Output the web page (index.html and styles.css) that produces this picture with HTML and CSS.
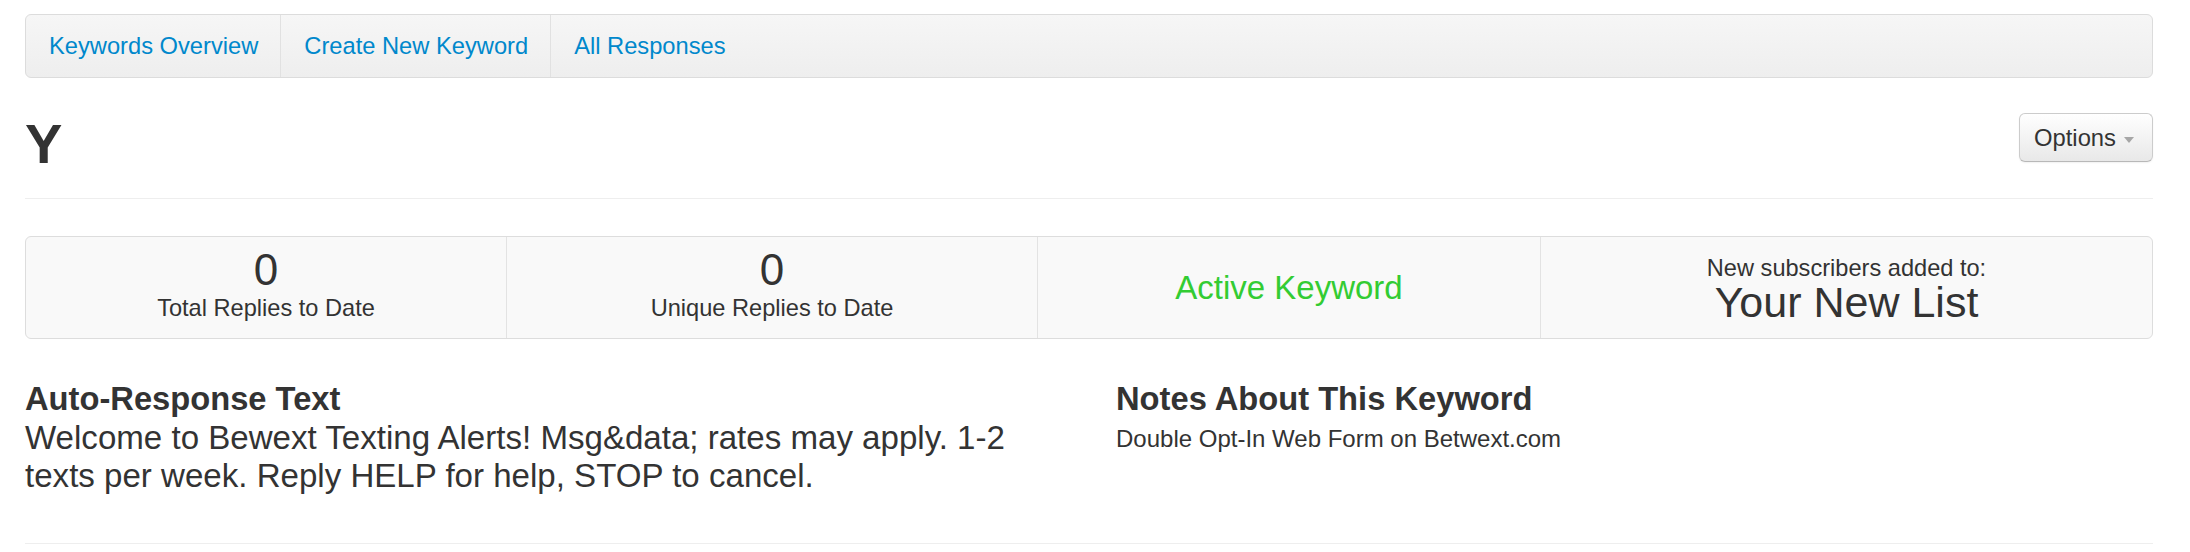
FILE: index.html
```html
<!DOCTYPE html>
<html lang="en">
<head>
<meta charset="utf-8">
<title>Keyword Y</title>
<link rel="stylesheet" href="styles.css">
</head>
<body>
<div class="container">
  <nav class="navbar">
    <a class="nav-item" href="#">Keywords Overview</a>
    <a class="nav-item" href="#">Create New Keyword</a>
    <a class="nav-item nav-last" href="#">All Responses</a>
  </nav>

  <header class="page-header">
    <h1 class="title">Y</h1>
    <button class="btn" type="button">Options <span class="caret"></span></button>
  </header>
  <hr class="rule rule-top">

  <div class="stats">
    <div class="stat stat-num">
      <div class="stat-value">0</div>
      <div class="stat-label">Total Replies to Date</div>
    </div>
    <div class="stat stat-num">
      <div class="stat-value">0</div>
      <div class="stat-label">Unique Replies to Date</div>
    </div>
    <div class="stat">
      <div class="stat-active">Active Keyword</div>
    </div>
    <div class="stat stat-list">
      <div class="stat-label">New subscribers added to:</div>
      <div class="stat-listname">Your New List</div>
    </div>
  </div>

  <div class="details">
    <section class="detail">
      <h2 class="detail-title">Auto-Response Text</h2>
      <p class="detail-lead">Welcome to Bewext Texting Alerts! Msg&amp;data; rates may apply. 1-2 texts per week. Reply HELP for help, STOP to cancel.</p>
    </section>
    <section class="detail">
      <h2 class="detail-title">Notes About This Keyword</h2>
      <p class="detail-note">Double Opt-In Web Form on Betwext.com</p>
    </section>
  </div>
  <hr class="rule rule-bottom">
</div>
</body>
</html>
```

FILE: styles.css
```css
html, body {
  margin: 0;
  padding: 0;
  background: #ffffff;
}

body {
  font-family: "Liberation Sans", Arial, Helvetica, sans-serif;
  color: #333333;
  font-size: 23.7px;
}

.container {
  width: 2128px;
  margin-left: 25px;
  padding-top: 14px;
}

/* nav bar */
.navbar {
  display: flex;
  height: 62px;
  border: 1px solid #dcdcdc;
  border-radius: 6px;
  background: linear-gradient(#f6f6f6, #eeeeee);
}

.nav-item {
  display: flex;
  align-items: center;
  padding: 0 22px 0 23px;
  border-right: 1px solid #e1e1e1;
  color: #0088cc;
  text-decoration: none;
  font-size: 23.7px;
}

.nav-last {
  border-right: none;
}

/* header */
.page-header {
  display: flex;
  justify-content: space-between;
  align-items: flex-start;
  margin-top: 35px;
}

.title {
  margin: 0;
  font-size: 56px;
  line-height: 62px;
  font-weight: bold;
  color: #333333;
}

.btn {
  display: flex;
  align-items: center;
  gap: 8px;
  height: 49px;
  padding: 0 18px 0 14px;
  border: 1px solid #cccccc;
  border-bottom-color: #b8b8b8;
  border-radius: 6px;
  background: linear-gradient(#ffffff, #e8e8e8);
  box-shadow: 0 1px 2px rgba(0, 0, 0, 0.06);
  font-family: "Liberation Sans", Arial, Helvetica, sans-serif;
  font-size: 23.8px;
  color: #333333;
}

.caret {
  width: 0;
  height: 0;
  margin-top: 4px;
  border-left: 5px solid transparent;
  border-right: 5px solid transparent;
  border-top: 6px solid #a6a6a6;
}

.rule {
  height: 0;
  border: 0;
  border-top: 1px solid #eeeeee;
  margin: 0;
}

.rule-top {
  margin-top: 23px;
}

/* stats well */
.stats {
  display: grid;
  grid-template-columns: 480px 531px 503px 1fr;
  height: 101px;
  margin-top: 37px;
  border: 1px solid #dddddd;
  border-radius: 6px;
  background: #f9f9f9;
}

.stat {
  display: flex;
  flex-direction: column;
  align-items: center;
  justify-content: center;
  text-align: center;
  border-left: 1px solid #e3e3e3;
}

.stat:first-child {
  border-left: none;
}

.stat-num {
  padding-bottom: 4px;
}

.stat-value {
  font-size: 44px;
  line-height: 44px;
}

.stat-label {
  font-size: 23.6px;
  line-height: 32px;
}

.stat-active {
  font-size: 33px;
  line-height: 38px;
  color: #33cc33;
}

.stat-list {
  padding-top: 5px;
}

.stat-list .stat-label {
  line-height: 24px;
}

.stat-listname {
  font-size: 43px;
  line-height: 44px;
}

/* details */
.details {
  display: grid;
  grid-template-columns: 1fr 1fr;
  column-gap: 54px;
  margin-top: 42px;
}

.detail-title {
  margin: 0;
  font-size: 32.7px;
  line-height: 36px;
  font-weight: bold;
  color: #333333;
}

.detail-lead {
  margin: 2px 0 0 0;
  font-size: 33.1px;
  line-height: 38px;
}

.detail-note {
  margin: 2px 0 0 0;
  font-size: 24px;
  line-height: 40px;
}

.rule-bottom {
  margin-top: 48px;
}
```
